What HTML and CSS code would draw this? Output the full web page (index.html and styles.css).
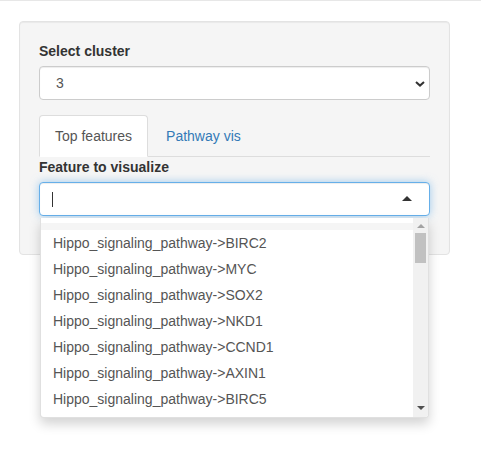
FILE: index.html
```html
<!DOCTYPE html>
<html>
<head>
<meta charset="utf-8">
<link rel="stylesheet" href="styles.css">
</head>
<body>
<div class="page">
  <div class="well">
    <div class="form-group">
      <label class="control-label">Select cluster</label>
      <div class="select">
        <span class="select-value">3</span>
        <svg class="chevron" width="10" height="6" viewBox="0 0 10 6"><path d="M1 1 L5 4.6 L9 1" fill="none" stroke="#333" stroke-width="2"/></svg>
      </div>
    </div>
    <ul class="nav-tabs">
      <li class="tab active"><a>Top features</a></li>
      <li class="tab"><a>Pathway vis</a></li>
    </ul>
    <div class="tab-content">
      <div class="form-group last">
        <label class="control-label">Feature to visualize</label>
        <div class="selectize">
          <div class="selectize-input">
            <span class="cursor"></span>
            <span class="caret-up"></span>
          </div>
          <div class="dropdown">
            <div class="options">
              <div class="top-gap"></div>
              <div class="peek"></div>
              <div class="option">Hippo_signaling_pathway-&gt;BIRC2</div>
              <div class="option">Hippo_signaling_pathway-&gt;MYC</div>
              <div class="option">Hippo_signaling_pathway-&gt;SOX2</div>
              <div class="option">Hippo_signaling_pathway-&gt;NKD1</div>
              <div class="option">Hippo_signaling_pathway-&gt;CCND1</div>
              <div class="option">Hippo_signaling_pathway-&gt;AXIN1</div>
              <div class="option">Hippo_signaling_pathway-&gt;BIRC5</div>
            </div>
            <div class="scrollbar">
              <div class="sb-btn"><span class="sb-up"></span></div>
              <div class="sb-thumb"></div>
              <div class="sb-space"></div>
              <div class="sb-btn"><span class="sb-down"></span></div>
            </div>
          </div>
        </div>
      </div>
    </div>
  </div>
</div>
</body>
</html>
```
FILE: styles.css
```css
* { box-sizing: border-box; }
html, body { margin: 0; padding: 0; background: #fff; }
body {
  font-family: "Liberation Sans", Arial, Helvetica, sans-serif;
  font-size: 14px;
  line-height: 20px;
  color: #333;
  border-top: 1px solid #e7e7e7;
  height: 455px;
  overflow: hidden;
}
.page { padding: 20px 0 0 19px; }
.well {
  width: 431px;
  padding: 19px 19px 19px 19px;
  background: #f5f5f5;
  border: 1px solid #e3e3e3;
  border-radius: 4px;
  box-shadow: inset 0 1px 1px rgba(0,0,0,.05);
}
.form-group { margin-bottom: 15px; }
.form-group.last { margin-bottom: 19px; }
.control-label {
  display: block;
  font-weight: bold;
  margin-bottom: 5px;
  color: #333;
}
.select {
  position: relative;
  height: 34px;
  background: #fff;
  border: 1px solid #ccc;
  border-radius: 4px;
  box-shadow: inset 0 1px 1px rgba(0,0,0,.075);
  display: flex;
  align-items: center;
  padding-left: 16px;
  color: #555;
}
.chevron { position: absolute; right: 4px; top: 14px; }
.nav-tabs {
  list-style: none;
  margin: 0;
  padding: 0;
  display: flex;
  border-bottom: 1px solid #ddd;
}
.tab { margin-bottom: -1px; }
.tab a {
  display: block;
  padding: 10px 15px;
  margin-right: 2px;
  border: 1px solid transparent;
  border-radius: 4px 4px 0 0;
  color: #337ab7;
  line-height: 20px;
}
.tab.active a {
  color: #555;
  background: #fff;
  border-color: #ddd #ddd transparent;
}
.selectize { position: relative; }
.selectize-input {
  position: relative;
  height: 34px;
  background: #fff;
  border: 1px solid #66afe9;
  border-radius: 4px;
  box-shadow: inset 0 1px 1px rgba(0,0,0,.075), 0 0 8px rgba(102,175,233,.6);
  padding: 0 12px;
  display: flex;
  align-items: center;
}
.cursor {
  display: block;
  width: 1px;
  height: 15px;
  background: #333;
  margin-top: 1px;
}
.caret-up {
  position: absolute;
  right: 17px;
  top: 13px;
  width: 0;
  height: 0;
  border-left: 5px solid transparent;
  border-right: 5px solid transparent;
  border-bottom: 5px solid #333;
}
.dropdown {
  position: absolute;
  top: 36px;
  left: 1px;
  right: 1px;
  height: 200px;
  background: #fff;
  border: 1px solid rgba(0,0,0,.12);
  border-top: 0;
  border-radius: 0 0 4px 4px;
  box-shadow: 0 6px 12px rgba(0,0,0,.175);
  display: flex;
  overflow: hidden;
  z-index: 10;
}
.options { flex: 1; overflow: hidden; padding-top: 1px; }
.top-gap { height: 4px; }
.peek { height: 7px; background: #f5f5f5; }
.option {
  padding: 3px 12px;
  line-height: 20px;
  color: #555;
  white-space: nowrap;
}
.scrollbar {
  width: 15px;
  background: #f1f1f1;
  display: flex;
  flex-direction: column;
}
.sb-btn {
  height: 15px;
  display: flex;
  align-items: center;
  justify-content: center;
}
.sb-up {
  width: 0; height: 0;
  border-left: 4px solid transparent;
  border-right: 4px solid transparent;
  border-bottom: 4px solid #a3a3a3;
}
.sb-down {
  width: 0; height: 0;
  border-left: 4px solid transparent;
  border-right: 4px solid transparent;
  border-top: 4px solid #505050;
  margin-bottom: 4px;
}
.sb-thumb {
  height: 30px;
  margin: 0 2px;
  background: #c1c1c1;
}
.sb-space { flex: 1; }
```
